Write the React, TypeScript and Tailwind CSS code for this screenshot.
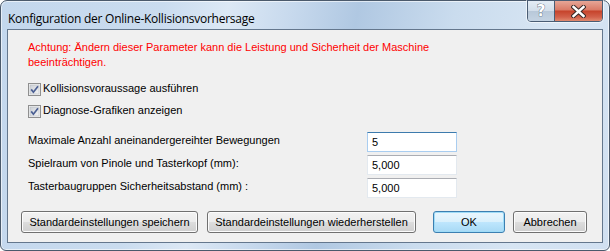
import React from "react";

const font = { fontFamily: '"Liberation Sans", Arial, sans-serif' };

function Check() {
  return (
    <svg width="13" height="13" viewBox="0 0 13 13" className="shrink-0">
      <defs>
        <linearGradient id="cbg" x1="0" y1="0" x2="1" y2="1">
          <stop offset="0" stopColor="#cbcfd5" />
          <stop offset="1" stopColor="#f4f4f4" />
        </linearGradient>
      </defs>
      <rect x="0.5" y="0.5" width="12" height="12" fill="#f4f4f4" stroke="#8f8f8f" />
      <rect x="2" y="2" width="9" height="9" fill="url(#cbg)" stroke="#b7bcc2" strokeWidth="0.6" />
      <path d="M3.2 6.4 L5.4 9.2 L10 3.2" fill="none" stroke="#4b5f93" strokeWidth="1.7" />
    </svg>
  );
}

function Btn({ children, w, def }: { children: React.ReactNode; w: string; def?: boolean }) {
  return (
    <div
      className={`${w} h-[22px] rounded-[3px] border flex items-center justify-center text-[11px] text-black ${
        def
          ? "border-[#3c7fb1] bg-[linear-gradient(#eaf6fd_0%,#d9f0fc_50%,#bee6fd_51%,#a7d9f5_100%)] shadow-[inset_0_0_0_1px_#9fdcf7]"
          : "border-[#707070] bg-[linear-gradient(#f2f2f2_0%,#ebebeb_50%,#dddddd_51%,#cfcfcf_100%)] shadow-[inset_0_0_0_1px_#fcfcfc]"
      }`}
    >
      {children}
    </div>
  );
}

function Field({ label, value, focus }: { label: string; value: string; focus?: boolean }) {
  return (
    <div className="flex items-center h-[20px]">
      <div className="w-[339px] text-[11px] text-black -mt-[3px]">{label}</div>
      <div
        className={`w-[90px] h-[20px] bg-white border flex items-center pl-[4px] text-[11px] text-black ${
          focus ? "border-[#a9cdf0] border-t-[#3d7bad]" : "border-[#e3e9ef] border-t-[#abadb3]"
        }`}
      >
        {value}
      </div>
    </div>
  );
}

export default function App() {
  return (
    <div className="w-[610px] h-[251px] bg-white" style={font}>
      <div className="w-[610px] h-[251px] rounded-t-[7px] rounded-b-[6px] border border-[#4b5a6c] flex flex-col bg-[linear-gradient(100deg,#c3d7ed_0%,#cadcef_25%,#dce8f5_35%,#c7d9ed_45%,#b0c8e2_55%,#cadcee_70%,#d7e5f3_85%,#d1e0f1_100%)] shadow-[inset_0_0_0_1px_rgba(255,255,255,0.6)]">
        <div className="h-[28px] flex items-start justify-between">
          <div className="pl-[7px] pt-[9px] text-[12px] text-black" style={{ fontFamily: '"Open Sans", "Noto Sans", sans-serif', letterSpacing: "-0.25px" }}>
            Konfiguration der Online-Kollisionsvorhersage
          </div>
          <div className="flex mr-[6px] -mt-px h-[22px] rounded-b-[4px] border border-[#4a5d74] overflow-hidden shadow-[0_0_0_1px_rgba(255,255,255,0.6)]">
            <div className="w-[27px] h-full flex items-center justify-center border-r border-[#4a5d74] bg-[linear-gradient(#e4ecf5_0%,#d2deea_50%,#b8c8d9_51%,#c4d3e2_100%)]">
              <span
                className="text-[15px] font-bold leading-none text-white"
                style={{ fontFamily: '"DejaVu Sans", sans-serif', WebkitTextStroke: "0.6px #2f3d4e", paintOrder: "stroke fill" }}
              >
                ?
              </span>
            </div>
            <div className="w-[47px] h-full flex items-center justify-center bg-[linear-gradient(#e6a697_0%,#d97a66_45%,#c6432b_50%,#d2614b_80%,#e08a6f_100%)]">
              <svg width="15" height="13" viewBox="0 0 15 13">
                <path d="M2.5 2 L12.5 11 M12.5 2 L2.5 11" stroke="#3a2a28" strokeWidth="4.4" strokeLinecap="square" />
                <path d="M2.5 2 L12.5 11 M12.5 2 L2.5 11" stroke="#ffffff" strokeWidth="2.4" strokeLinecap="square" />
              </svg>
            </div>
          </div>
        </div>
        <div className="mx-[6px] h-[214px] border border-[#64778d] bg-[#f0f0f0] pl-[20px] pt-[10px]">
          <div className="text-[11px] leading-[15px] text-[#ff0000] w-[440px]">
            Achtung: Ändern dieser Parameter kann die Leistung und Sicherheit der Maschine beeinträchtigen.
          </div>
          <div className="mt-[13px] flex items-center gap-[2px] h-[13px] text-[11px] text-black">
            <Check />
            <span className="-mt-[2px]">Kollisionsvoraussage ausführen</span>
          </div>
          <div className="mt-[9px] flex items-center gap-[2px] h-[13px] text-[11px] text-black">
            <Check />
            <span className="-mt-[2px]">Diagnose-Grafiken anzeigen</span>
          </div>
          <div className="mt-[14px] flex flex-col gap-[3px]">
            <Field label="Maximale Anzahl aneinandergereihter Bewegungen" value="5" focus />
            <Field label="Spielraum von Pinole und Tasterkopf (mm):" value="5,000" />
            <Field label="Tasterbaugruppen Sicherheitsabstand (mm) :" value="5,000" />
          </div>
          <div className="mt-[13px] -ml-[7px] flex">
            <Btn w="w-[177px]">Standardeinstellungen speichern</Btn>
            <div className="w-[9px]" />
            <Btn w="w-[209px]">Standardeinstellungen wiederherstellen</Btn>
            <div className="w-[17px]" />
            <Btn w="w-[72px]" def>
              OK
            </Btn>
            <div className="w-[8px]" />
            <Btn w="w-[74px]">Abbrechen</Btn>
          </div>
        </div>
      </div>
    </div>
  );
}
